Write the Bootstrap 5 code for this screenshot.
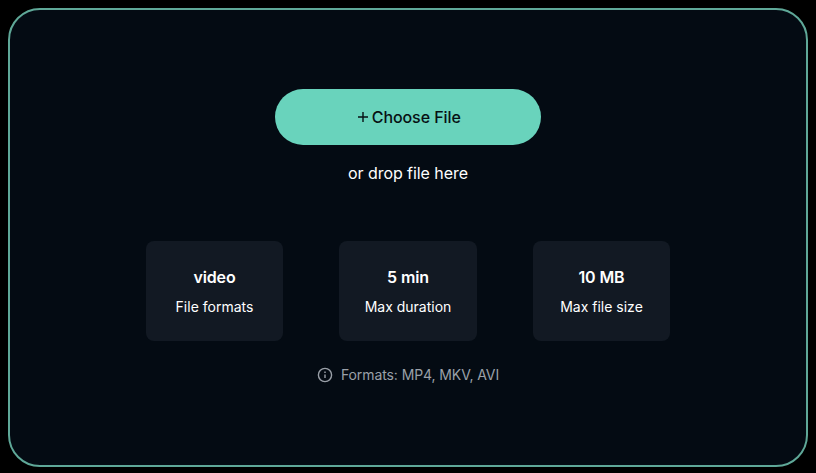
<!DOCTYPE html>
<html lang="en">
<head>
<meta charset="utf-8">
<title>Upload</title>
<link href="https://cdn.jsdelivr.net/npm/bootstrap@5.3.0/dist/css/bootstrap.min.css" rel="stylesheet">
<style>
html,body{height:100%;background:#000;}
body{font-family:"Inter","Liberation Sans",sans-serif;padding:8px 8px 6px;}
.drop-frame{height:459px;width:800px;border:2px solid #5fa898;border-radius:32px;background:#040b13;padding-top:79px;}
.choose-btn{width:266px;height:56px;border-radius:28px;background:#69d3bc;border:0;color:#071013;font-size:16px;font-weight:500;letter-spacing:-.08px;padding:0 0 0 3px;gap:3.5px;}
.choose-btn:hover{background:#69d3bc;color:#071013;}
.drop-text{color:#fff;font-size:16px;line-height:24px;margin-top:16px;letter-spacing:-.06px;}
.stat-row{margin-top:56px;gap:56px;}
.stat-box{width:137.5px;height:100px;background:#121923;border-radius:8px;padding-top:26px;}
.stat-val{color:#fff;font-size:16px;font-weight:600;line-height:20px;letter-spacing:-.12px;}
.stat-lab{color:#fff;font-size:14px;line-height:20px;margin-top:10px;}
.note{color:#9aa0a8;font-size:14px;line-height:20px;margin-top:24px;gap:8px;letter-spacing:-.09px;}
</style>
</head>
<body>
<div class="drop-frame d-flex flex-column align-items-center">
  <button type="button" class="btn choose-btn d-flex align-items-center justify-content-center">
    <svg width="10" height="10" viewBox="0 0 10 10" fill="none" stroke="#071013" stroke-width="1.4"><path d="M5 0v10M0 5h10"/></svg>
    <span>Choose File</span>
  </button>
  <div class="drop-text">or drop file here</div>
  <div class="stat-row d-flex">
    <div class="stat-box text-center"><div class="stat-val">video</div><div class="stat-lab">File formats</div></div>
    <div class="stat-box text-center"><div class="stat-val">5 min</div><div class="stat-lab">Max duration</div></div>
    <div class="stat-box text-center"><div class="stat-val">10 MB</div><div class="stat-lab">Max file size</div></div>
  </div>
  <div class="note d-flex align-items-center">
    <svg width="16" height="16" viewBox="0 0 16 16" fill="none" stroke="#9aa0a8" stroke-width="1.4"><circle cx="8" cy="8" r="6.6"/><path d="M8 7.4v3.6"/><path d="M8 4.6v1.4" stroke-width="1.5"/></svg>
    <span>Formats: MP4, MKV, AVI</span>
  </div>
</div>
<script src="https://cdn.jsdelivr.net/npm/bootstrap@5.3.0/dist/js/bootstrap.bundle.min.js"></script>
</body>
</html>
